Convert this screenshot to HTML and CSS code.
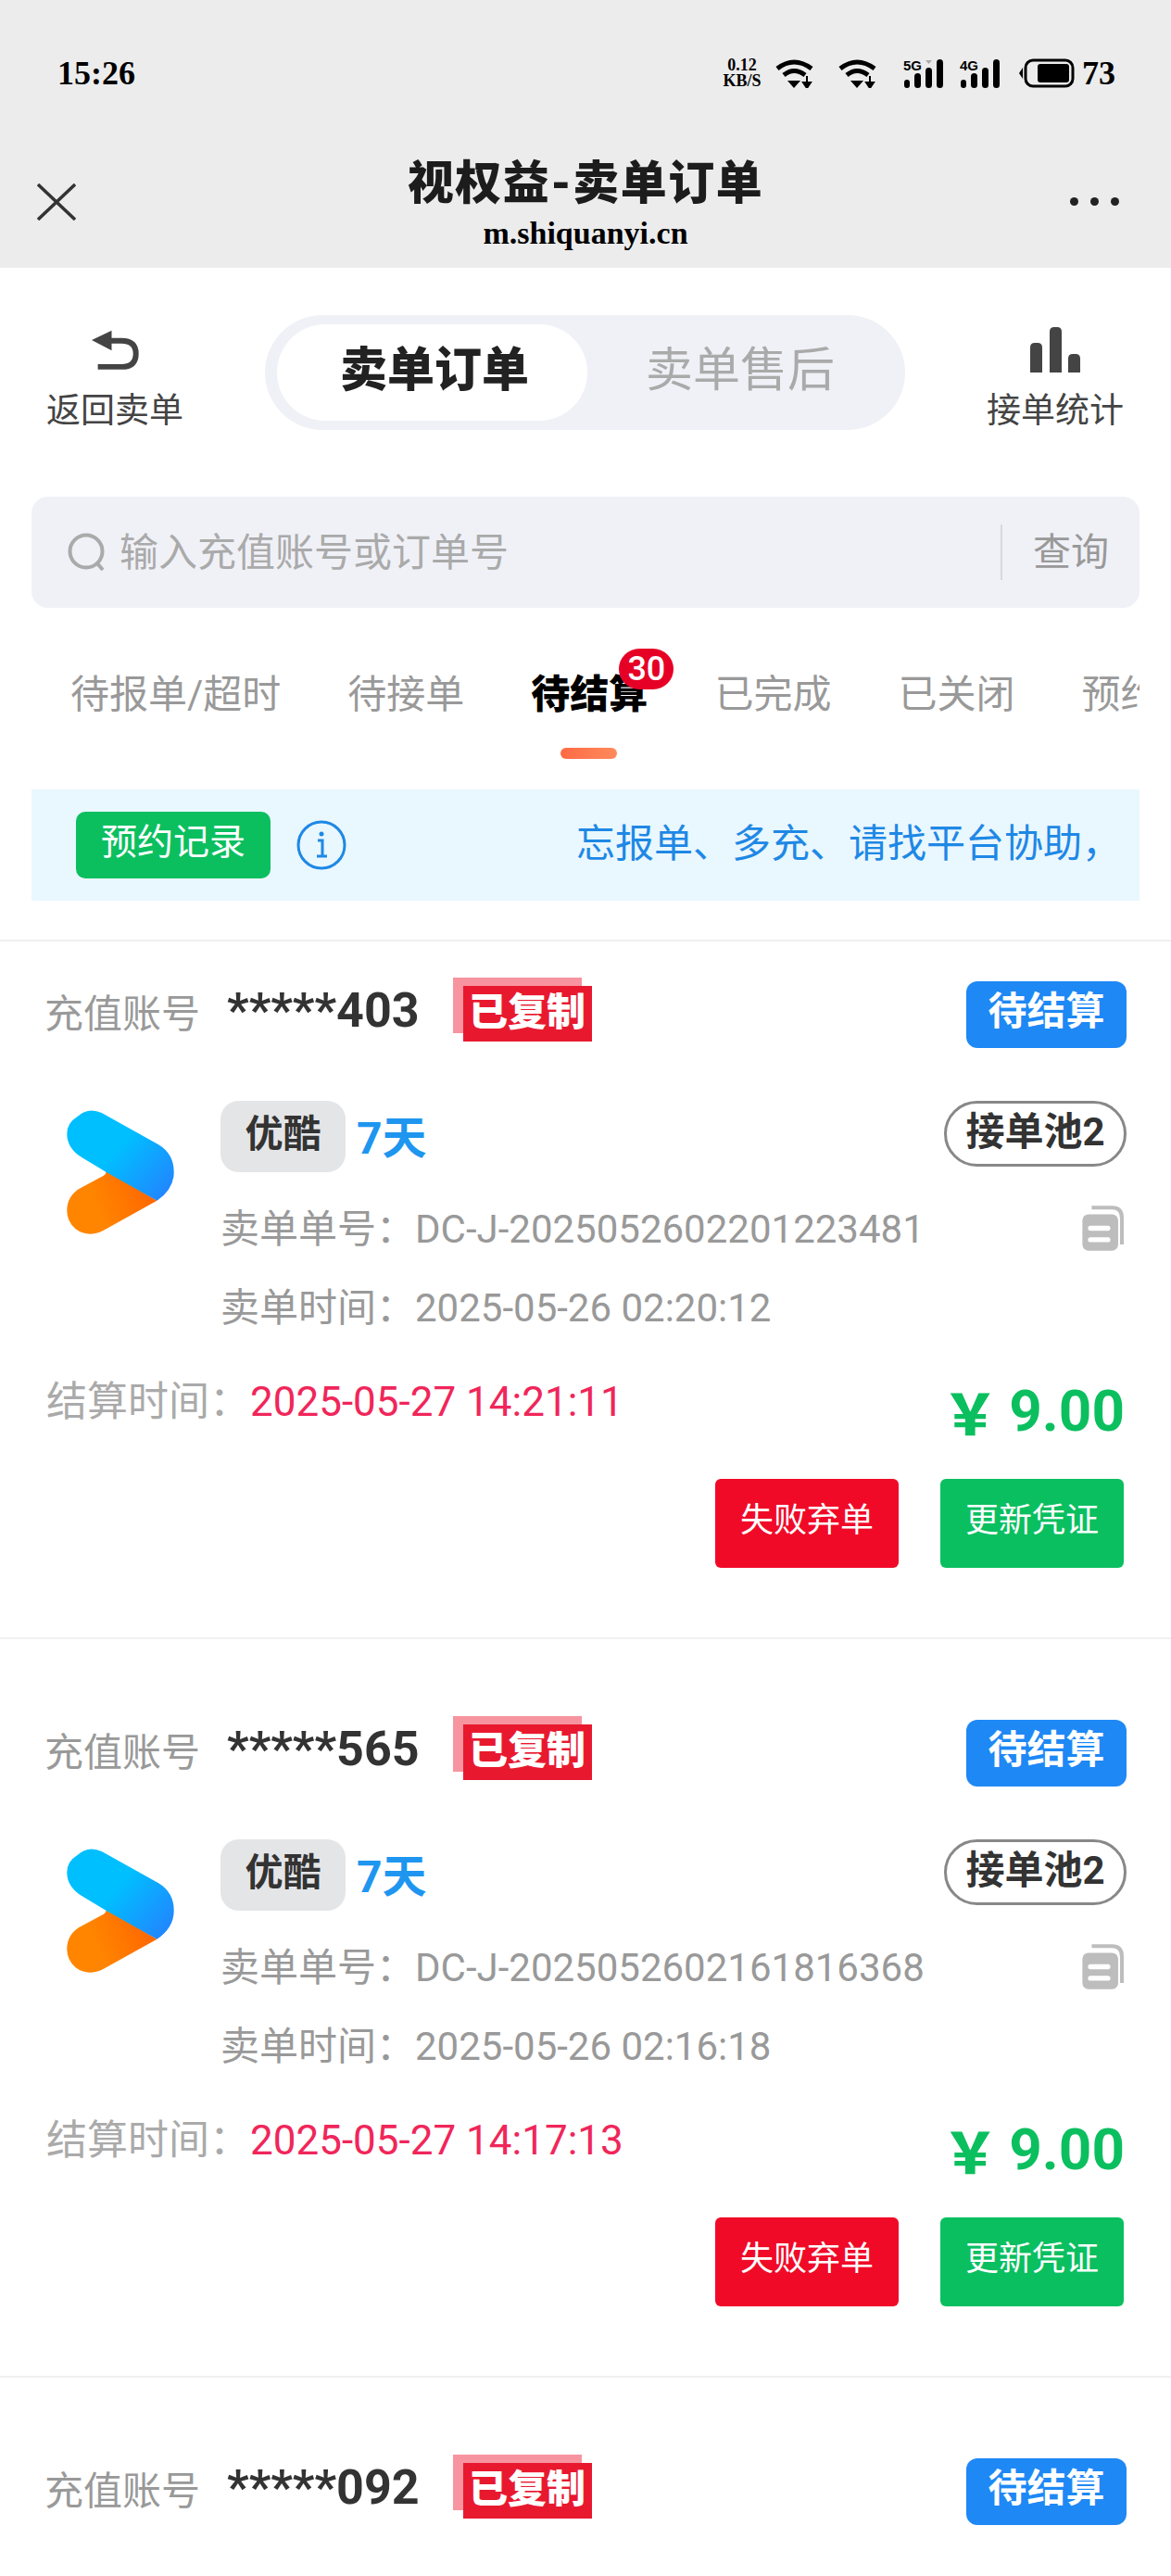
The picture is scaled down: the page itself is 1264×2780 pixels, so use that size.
FILE: index.html
```html
<!DOCTYPE html>
<html lang="zh-CN">
<head>
  <meta charset="UTF-8">
  <meta name="viewport" content="width=device-width, initial-scale=1.0">
  <title>视权益-卖单订单</title>
  <link rel="stylesheet" href="styles.css">
</head>
<body>

<svg class="defs" width="0" height="0">
  <defs>
    <linearGradient id="blue-grad" x1="0.45" y1="0.45" x2="1" y2="0.85">
      <stop offset="0" stop-color="#00bfff"/>
      <stop offset="1" stop-color="#2285ff"/>
    </linearGradient>
    <linearGradient id="orange-grad" x1="0.3" y1="0.5" x2="1" y2="0.3">
      <stop offset="0" stop-color="#ff8500"/>
      <stop offset="1" stop-color="#ff6400"/>
    </linearGradient>
    <symbol id="youku" viewBox="97 80 348 410">
      <path fill="url(#orange-grad)" d="M225 280 L390 378 L215 475 Q165 500 125 470 Q97 445 97 410 Q97 365 135 340 L215 297 Q225 292 225 280Z"/>
      <path fill="url(#blue-grad)" d="M130 105 Q165 72 210 92 L395 195 Q445 225 445 285 Q445 340 390 378 L225 285 L150 240 Q97 210 97 160 Q97 125 130 105Z"/>
    </symbol>
    <symbol id="copy" viewBox="85 70 135 146">
      <rect x="85" y="98" width="115" height="117" rx="20" fill="#bdbdbd"/>
      <rect x="103" y="135" width="72" height="16" rx="8" fill="#fff"/>
      <rect x="103" y="172" width="72" height="16" rx="8" fill="#fff"/>
      <path d="M115 77 H180 Q212 77 212 110 V195" fill="none" stroke="#bdbdbd" stroke-width="12"/>
    </symbol>
    <symbol id="wifi" viewBox="0 0 41 32">
      <path d="M2 11 Q20 -3 39 11" fill="none" stroke="#000" stroke-width="5"/>
      <path d="M9 18 Q20 9 32 18" fill="none" stroke="#000" stroke-width="5"/>
      <path d="M13 24 H27 L20 32Z" fill="#000"/>
      <path d="M34 19 V26 M30 26 H38 L34 32Z" fill="#000" stroke="#000" stroke-width="2"/>
    </symbol>
  </defs>
</svg>

<div class="top">
  <div class="status-bar">
    <span class="clock">15:26</span>
    <div class="status-icons">
      <div class="speed"><span>0.12</span><span>KB/S</span></div>
      <svg class="wifi" width="41" height="32"><use href="#wifi"/></svg>
      <svg class="wifi second" width="41" height="32"><use href="#wifi"/></svg>
      <svg class="signal" width="44" height="32" viewBox="0 0 44 32">
        <text x="0" y="13" class="net">5G</text>
        <rect x="1" y="23" width="6" height="9" rx="3"/>
        <rect x="12" y="16" width="7" height="16" rx="3.5"/>
        <rect x="24" y="10" width="7" height="22" rx="3.5"/>
        <rect x="36" y="1" width="7" height="31" rx="3.5"/>
        <path d="M24 2 H31 L27.5 6Z" fill="#aaa"/>
      </svg>
      <svg class="signal second" width="44" height="32" viewBox="0 0 44 32">
        <text x="0" y="13" class="net">4G</text>
        <rect x="1" y="23" width="6" height="9" rx="3"/>
        <rect x="12" y="16" width="7" height="16" rx="3.5"/>
        <rect x="24" y="10" width="7" height="22" rx="3.5"/>
        <rect x="36" y="1" width="7" height="31" rx="3.5"/>
      </svg>
      <svg class="battery" width="60" height="32" viewBox="0 0 60 32">
        <path d="M0 16 L4 10 V22Z"/>
        <rect x="7" y="2" width="51" height="28" rx="8" fill="none" stroke="#000" stroke-width="3"/>
        <rect x="20" y="6" width="34" height="20" rx="3"/>
      </svg>
      <span class="level">73</span>
    </div>
  </div>
  <div class="nav">
    <svg class="close" width="42" height="40" viewBox="0 0 42 40">
      <path d="M1 1 L41 39 M41 1 L1 39" stroke="#333" stroke-width="3.5"/>
    </svg>
    <div class="nav-title">
      <div class="title">视权益-卖单订单</div>
      <div class="url">m.shiquanyi.cn</div>
    </div>
    <div class="dots"><i></i><i></i><i></i></div>
  </div>
</div>

<div class="toolbar">
  <div class="tool back">
    <svg width="53" height="45" viewBox="235 105 160 135">
      <path d="M238 141 L303 110 V175Z" fill="#444"/>
      <path d="M300 143 H335 Q382 143 382 185 Q382 228 335 228 H258" fill="none" stroke="#444" stroke-width="18"/>
    </svg>
    <span>返回卖单</span>
  </div>
  <div class="segment">
    <div class="seg active">卖单订单</div>
    <div class="seg">卖单售后</div>
  </div>
  <div class="tool stats">
    <svg width="54" height="49" viewBox="0 0 54 49">
      <path d="M0 49 V22 Q0 17 5 17 H8 Q13 17 13 22 V49Z M21 49 V5 Q21 0 26 0 H29 Q34 0 34 5 V49Z M41 49 V34 Q41 29 46 29 H49 Q54 29 54 34 V49Z" fill="#444"/>
    </svg>
    <span>接单统计</span>
  </div>
</div>

<div class="search">
  <svg width="43" height="42" viewBox="0 0 43 42">
    <circle cx="20" cy="20" r="17.5" fill="none" stroke="#aaa" stroke-width="4"/>
    <path d="M32 33 L38 40" stroke="#aaa" stroke-width="4"/>
  </svg>
  <span class="placeholder">输入充值账号或订单号</span>
  <span class="search-line"></span>
  <span class="search-btn">查询</span>
</div>

<div class="tabs">
  <div class="tab">待报单/超时</div>
  <div class="tab">待接单</div>
  <div class="tab current">待结算<span class="badge">30</span><span class="tab-bar"></span></div>
  <div class="tab">已完成</div>
  <div class="tab">已关闭</div>
  <div class="tab">预约记录</div>
</div>

<div class="notice">
  <div class="notice-btn">预约记录</div>
  <svg class="info" width="54" height="54" viewBox="0 0 54 54">
    <circle cx="27" cy="27" r="25" fill="none" stroke="#1e88e5" stroke-width="3"/>
    <circle cx="27" cy="15" r="2.5" fill="#1e88e5"/>
    <path d="M23 22 H28 V38 M22 39 H33" fill="none" stroke="#1e88e5" stroke-width="3"/>
  </svg>
  <div class="notice-text">忘报单、多充、请找平台协助，</div>
</div>

<div class="order">
  <div class="order-head">
    <span class="head-label">充值账号</span>
    <span class="account">*****403</span>
    <span class="stamp"><span class="stamp-text">已复制</span></span>
    <span class="status">待结算</span>
  </div>
  <div class="order-main">
    <svg class="logo" width="116" height="136"><use href="#youku"/></svg>
    <div class="order-info">
      <div class="product">
        <span class="brand">优酷</span>
        <span class="days">7天</span>
        <span class="pool">接单池2</span>
      </div>
      <div class="meta">卖单单号：DC-J-2025052602201223481<svg class="copy" width="46" height="49"><use href="#copy"/></svg></div>
      <div class="meta">卖单时间：2025-05-26 02:20:12</div>
    </div>
  </div>
  <div class="settle">
    <div class="settle-time">结算时间：<span class="deadline">2025-05-27 14:21:11</span></div>
    <div class="price"><span class="yen">￥</span>9.00</div>
  </div>
  <div class="actions">
    <div class="action fail">失败弃单</div>
    <div class="action update">更新凭证</div>
  </div>
</div>

<div class="order">
  <div class="order-head">
    <span class="head-label">充值账号</span>
    <span class="account">*****565</span>
    <span class="stamp"><span class="stamp-text">已复制</span></span>
    <span class="status">待结算</span>
  </div>
  <div class="order-main">
    <svg class="logo" width="116" height="136"><use href="#youku"/></svg>
    <div class="order-info">
      <div class="product">
        <span class="brand">优酷</span>
        <span class="days">7天</span>
        <span class="pool">接单池2</span>
      </div>
      <div class="meta">卖单单号：DC-J-2025052602161816368<svg class="copy" width="46" height="49"><use href="#copy"/></svg></div>
      <div class="meta">卖单时间：2025-05-26 02:16:18</div>
    </div>
  </div>
  <div class="settle">
    <div class="settle-time">结算时间：<span class="deadline">2025-05-27 14:17:13</span></div>
    <div class="price"><span class="yen">￥</span>9.00</div>
  </div>
  <div class="actions">
    <div class="action fail">失败弃单</div>
    <div class="action update">更新凭证</div>
  </div>
</div>

<div class="order last">
  <div class="order-head">
    <span class="head-label">充值账号</span>
    <span class="account">*****092</span>
    <span class="stamp"><span class="stamp-text">已复制</span></span>
    <span class="status">待结算</span>
  </div>
</div>

</body>
</html>
```

FILE: styles.css
```css
* {
  box-sizing: border-box;
}

html, body {
  height: 2780px;
  overflow: hidden;
}

body {
  margin: 0;
  background-color: #fff;
  font-family: Roboto, "Noto Sans CJK SC", sans-serif;
  color: #333;
}

.defs {
  position: absolute;
}

/* grey browser header */
.top {
  height: 289px;
  background-color: #ececec;
  color: #000;
}

.status-bar {
  display: flex;
  justify-content: space-between;
  align-items: center;
  height: 156px;
  padding: 56px 60px 54px 62px;
}

.clock, .level {
  font-family: "Liberation Serif", serif;
  font-weight: bold;
  font-size: 36px;
  line-height: 46px;
}

.status-icons {
  display: flex;
  align-items: center;
}

.speed {
  display: flex;
  flex-direction: column;
  align-items: center;
  width: 42px;
  font-family: "Liberation Serif", serif;
  font-weight: bold;
  font-size: 18px;
  line-height: 17px;
  margin-right: 15px;
}

.wifi.second {
  margin-left: 27px;
}

.signal {
  margin-left: 29px;
}

.signal.second {
  margin-left: 17px;
}

.net {
  font-family: "Liberation Sans", sans-serif;
  font-weight: bold;
  font-size: 15px;
}

.battery {
  margin-left: 20px;
}

.level {
  margin-left: 8px;
}

.nav {
  display: grid;
  grid-template-columns: 1fr auto 1fr;
  align-items: center;
  height: 133px;
  padding: 0 40px 10px;
}

.nav-title {
  text-align: center;
  padding-top: 3px;
}

.title {
  font-size: 50px;
  font-weight: 900;
  letter-spacing: 1.5px;
  line-height: 58px;
  color: #1c1c1c;
}

.url {
  font-family: "Liberation Serif", serif;
  font-weight: bold;
  font-size: 34px;
  line-height: 36px;
  margin-top: 7px;
}

.dots {
  display: flex;
  justify-content: flex-end;
  gap: 13px;
  margin-right: 16px;
}

.dots i {
  width: 9px;
  height: 9px;
  border-radius: 50%;
  background-color: #222;
}

/* back / segment / stats */
.toolbar {
  display: flex;
  justify-content: space-between;
  align-items: flex-start;
  height: 175px;
  padding: 51px 51px 0 50px;
}

.tool {
  display: flex;
  flex-direction: column;
  align-items: center;
  width: 148px;
  font-size: 37px;
  line-height: 50px;
  color: #444;
}

.back {
  margin-top: 15px;
  gap: 19px;
}

.stats {
  margin-top: 13px;
  gap: 17px;
}

.segment {
  display: flex;
  width: 691px;
  height: 124px;
  padding: 10px 13px;
  border-radius: 62px;
  background-color: #f0f1f7;
}

.seg {
  flex: 1;
  border-radius: 52px;
  text-align: center;
  font-size: 51px;
  line-height: 100px;
  color: #aaa;
}

.seg.active {
  padding-left: 5px;
  background-color: #fff;
  color: #222;
  font-weight: 900;
}

/* search */
.search {
  display: flex;
  align-items: center;
  height: 120px;
  margin: 72px 34px 0;
  padding: 0 33px 0 39px;
  border-radius: 18px;
  background-color: #f0f1f7;
}

.placeholder {
  margin-left: 13px;
  padding-bottom: 8px;
  font-size: 42px;
  color: #aaa;
}

.search-line {
  width: 2px;
  height: 60px;
  margin-left: auto;
  background-color: #d8d8dc;
}

.search-btn {
  margin-left: 33px;
  padding-bottom: 8px;
  font-size: 41px;
  color: #999;
}

/* status tabs */
.tabs {
  display: flex;
  gap: 72px;
  height: 196px;
  margin: 0 34px;
  padding: 64px 0 0 42px;
  overflow: hidden;
}

.tab {
  position: relative;
  flex-shrink: 0;
  height: 60px;
  font-size: 42px;
  line-height: 60px;
  color: #999;
  white-space: nowrap;
}

.tab.current {
  color: #000;
  font-weight: 900;
}

.badge {
  position: absolute;
  left: 95px;
  top: -20px;
  width: 59px;
  height: 44px;
  border-radius: 22px;
  background-color: #e60026;
  color: #fff;
  text-align: center;
  font-size: 36px;
  font-weight: 500;
  line-height: 44px;
}

.tab-bar {
  position: absolute;
  left: 32px;
  top: 87px;
  width: 61px;
  height: 12px;
  border-radius: 6px;
  background: linear-gradient(90deg, #ff6a45, #ff8a5c);
}

/* notice strip */
.notice {
  display: flex;
  align-items: center;
  height: 120px;
  margin: 0 34px 42px;
  padding: 0 20px 0 48px;
  background-color: #e9f7fe;
}

.notice-btn {
  width: 210px;
  height: 72px;
  border-radius: 10px;
  background-color: #0bbf5f;
  color: #fff;
  text-align: center;
  font-size: 39px;
  line-height: 67px;
}

.info {
  margin-left: 28px;
}

.notice-text {
  margin-left: auto;
  padding-bottom: 12px;
  font-size: 42px;
  color: #1e88e5;
}

/* order cards */
.order {
  padding: 43px 48px 75px;
  border-top: 2px solid #f0f0f0;
}

.order + .order {
  padding-top: 87px;
}

.order.last {
  padding-bottom: 0;
}

.order-head {
  display: flex;
  align-items: center;
  height: 72px;
}

.head-label {
  padding-bottom: 10px;
  font-size: 42px;
  color: #999;
}

.account {
  margin-left: 29px;
  padding-bottom: 10px;
  font-size: 52px;
  font-weight: 700;
  color: #333;
}

.stamp {
  position: relative;
  width: 139px;
  height: 60px;
  margin-left: 36px;
  margin-bottom: 20px;
  background-color: #f7949f;
}

.stamp-text {
  position: absolute;
  left: 11px;
  top: 9px;
  width: 139px;
  height: 60px;
  background-color: #e8192f;
  color: #fff;
  text-align: center;
  font-size: 42px;
  font-weight: 900;
  line-height: 58px;
}

.status {
  width: 173px;
  height: 72px;
  margin-left: auto;
  border-radius: 12px;
  background-color: #1e88f5;
  color: #fff;
  text-align: center;
  font-size: 42px;
  font-weight: 700;
  line-height: 66px;
}

.order-main {
  display: flex;
  margin-top: 57px;
}

.logo {
  flex-shrink: 0;
  margin: 9px 50px 0 24px;
}

.order-info {
  flex: 1;
}

.product {
  display: flex;
  align-items: flex-start;
  height: 77px;
  margin-bottom: 18px;
}

.brand {
  width: 135px;
  height: 77px;
  border-radius: 20px;
  background-color: #e4e5e7;
  text-align: center;
  font-size: 41px;
  font-weight: 700;
  line-height: 72px;
}

.days {
  margin-left: 12px;
  margin-top: 6px;
  font-size: 48px;
  font-weight: 700;
  line-height: 70px;
  color: #1e96f0;
}

.pool {
  width: 197px;
  height: 71px;
  margin-left: auto;
  border: 3px solid #888;
  border-radius: 36px;
  text-align: center;
  font-size: 42px;
  font-weight: 700;
  line-height: 62px;
}

.meta {
  display: flex;
  align-items: center;
  justify-content: flex-start;
  height: 85px;
  padding-bottom: 6px;
  font-size: 42px;
  color: #999;
  white-space: pre;
}

.copy {
  margin-left: auto;
  margin-top: 6px;
  margin-right: 2px;
}

.settle {
  display: flex;
  justify-content: space-between;
  align-items: flex-start;
  margin-top: 30px;
  padding-left: 2px;
}

.settle-time {
  font-size: 44px;
  line-height: 60px;
  color: #aaa;
}

.deadline {
  color: #f0265a;
}

.price {
  display: flex;
  align-items: center;
  margin-right: 2px;
  font-size: 62px;
  font-weight: 700;
  line-height: 80px;
  color: #0bbf5f;
}

.yen {
  margin-right: 12px;
  font-family: "Noto Sans CJK SC", sans-serif;
  font-size: 60px;
  font-weight: 900;
}

.actions {
  display: flex;
  justify-content: flex-end;
  gap: 45px;
  margin-top: 33px;
  padding-right: 3px;
}

.action {
  width: 198px;
  height: 96px;
  border-radius: 6px;
  color: #fff;
  text-align: center;
  font-size: 36px;
  line-height: 90px;
}

.fail {
  background-color: #f00a28;
}

.update {
  background-color: #0abf60;
}
```
